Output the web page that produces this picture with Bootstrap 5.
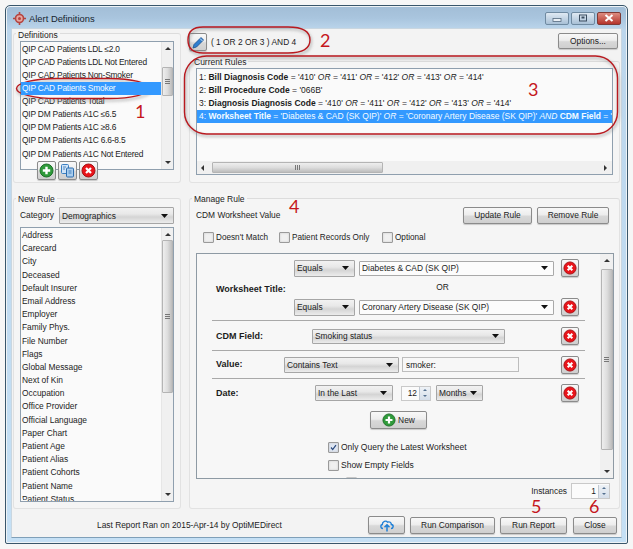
<!DOCTYPE html>
<html lang="en"><head><meta charset="utf-8"><title>Alert Definitions</title>
<link href="https://cdn.jsdelivr.net/npm/bootstrap@5.3.0/dist/css/bootstrap.min.css" rel="stylesheet">
<style>
:root{--hl:#3399ff}
html,body{height:100%}
body{background:#f6f6f6;font:8.4px/13px "Liberation Sans",Arial,sans-serif;color:#1c1c1c;overflow:hidden}
.stage{position:relative;width:633px;height:549px;padding:5px}
.win{width:623px;height:539px;border:1px solid #39566b;border-radius:5px 5px 2px 2px;background:linear-gradient(#a2bdd6 0,#a9c5de 12px,#bcd6ec 24px,#c5e0f5 100%);display:flex;flex-direction:column;padding:0 5px 5px 5px;box-shadow:0 0 0 1px #eef3f6 inset}
.tbar{height:22px;display:flex;align-items:center;font-size:9.4px;color:#16242f;padding:3px 0 0 2px;gap:3px}
.wctl{margin-left:auto;margin-right:1px;display:flex;gap:2px;margin-top:-1px}
.wctl span{width:24px;height:13px;border:1px solid #6f8aa1;border-radius:2px;background:linear-gradient(#dfe9f3,#a8c0d6);display:flex;align-items:center;justify-content:center}
.wctl span.xb{background:linear-gradient(#dd8c80,#b5342b);border-color:#7f3a35;color:#fff}
.client{flex:1;background:#f3f3f3;border:1px solid #c9d6e0;border-bottom-color:#7f9fb8;display:flex;flex-direction:column;padding:4px 1px 0 1px;min-height:0}
.toprow{display:flex;gap:8px;height:150px}
.midrow{display:flex;gap:8px;height:311px;margin-top:15px}
.lcol{width:168px;flex:none;position:relative}
.rcol{width:431px;flex:none;position:relative;display:flex;flex-direction:column}
fieldset.fs{border:1px solid #e2e2e2;border-top-color:#dcdcdc;border-radius:3px;position:relative;height:100%;padding:7px 6px 6px 6px;background:#f5f5f5}
fieldset.fs>legend{position:absolute;top:-5px;left:2px;float:none;width:auto;margin:0;padding:0 2px;font-size:8.5px;line-height:11px;background:#f5f5f5;color:#222}
.toprow .lcol fieldset.fs>legend{top:-4px}
.lbx{border:1px solid #8f9fae;background:#fafafa;display:flex;overflow:hidden;min-height:0}
.items{flex:1;min-width:0;overflow:hidden}
.items .list-group-item{flex:none;background:transparent;border:0;padding:0 1px;height:13.2px;line-height:13px;font-size:8.4px;color:#1c1c1c;white-space:nowrap;border-radius:0}
.items .list-group-item.active{background:var(--hl);color:#f4fbff}
.vsb{width:12px;flex:none;background:#f0f0f0;display:flex;flex-direction:column;align-items:center;border-left:1px solid #e6e6e6}
.vsb i,.hsb i{display:block;flex:none}
.up{width:0;height:0;border:3px solid transparent;border-bottom:3px solid #333;border-top:0;margin:5px 0 4px}
.dn{width:0;height:0;border:3px solid transparent;border-top:3px solid #333;border-bottom:0;margin:4px 0 5px}
.thumb{width:11px;flex:none;border:1px solid #b4b4b4;border-radius:1px;background:linear-gradient(90deg,#eee,#ddd 50%,#bcbcbc);display:flex;align-items:center;justify-content:center}
.grip{width:5px;height:5px;border-top:1px solid #777;border-bottom:1px solid #777;position:relative}
.grip::after{content:"";position:absolute;left:0;right:0;top:1px;border-top:1px solid #777}
.th1{height:29px;margin-top:13px}.sp1{flex:1}
.th2{height:153px;margin-top:0}
.deflist{height:129px}
.deflist .items{padding-top:1px}
.deflist .list-group-item{font-size:8.4px;letter-spacing:-.2px}
.tools{position:absolute;left:23px;top:127px;display:flex;gap:2px}
.ib{width:19px;height:19px;padding:0;display:flex;align-items:center;justify-content:center}
.btn.wb{font:8.4px/13px "Liberation Sans",Arial,sans-serif;color:#1c1c1c;border:1px solid #8b8b8b;border-radius:2px;background:linear-gradient(#f8f8f8,#ededed 45%,#d8d8d8 55%,#cfcfcf);box-shadow:0 1px 1px rgba(0,0,0,.18);padding:0}
.rulehead{height:28px;display:flex;align-items:flex-start;gap:4px}
.rulehead .btn-opt{margin-left:auto;margin-right:2px;width:60px;height:16px}
.pb{width:18px;height:18px}
.expr{margin-top:2px;line-height:14px}
.rulesfs{height:122px!important;padding:6px!important}
.rules{height:107px;flex-direction:column}
.rules .items{padding-top:2px}
.rules .list-group-item{padding:0 2px;overflow:hidden;font-size:8.5px}
.rules .list-group-item.active{letter-spacing:-.03px}
.rules b{font-weight:700}
.rules em{font-style:italic}
.hsb{height:13px;flex:none;background:#f0f0f0;display:flex;align-items:center}
.lf{width:0;height:0;border:3px solid transparent;border-right:3px solid #333;border-left:0;margin:0 4px}
.rg{width:0;height:0;border:3px solid transparent;border-left:3px solid #333;border-right:0;margin:0 5px;margin-left:auto}
.hth{width:171px;height:11px;margin-left:4px;border:1px solid #b4b4b4;border-radius:1px;background:linear-gradient(#eee,#ddd 50%,#bcbcbc);display:flex;align-items:center;justify-content:center}
.hgrip{width:5px;height:5px;border-left:1px solid #777;border-right:1px solid #777;position:relative}
.hgrip::after{content:"";position:absolute;top:0;bottom:0;left:1px;border-left:1px solid #777}
.catrow{display:flex;align-items:center;height:17px;margin:1px 0 3px 0}
.catrow label{width:39px;flex:none}
.catlist .items{padding-top:1px}
.form-select.cb{font:8.4px/12px "Liberation Sans",Arial,sans-serif;color:#1c1c1c;height:16px;padding:0 12px 0 2px;border:1px solid #a6a6a6;border-radius:1px;background-color:#e4e4e4;min-height:0;background-image:url("data:image/svg+xml,%3Csvg xmlns='http://www.w3.org/2000/svg' width='7' height='4'%3E%3Cpath d='M0 0h7L3.5 4z' fill='%23111'/%3E%3C/svg%3E"),linear-gradient(#f2f2f2,#e8e8e8 40%,#d4d4d4 60%,#ececec);background-size:7px 4px,100% 100%;background-position:right 5px center,0 0;background-repeat:no-repeat}
.form-select.cb.flat{background-image:url("data:image/svg+xml,%3Csvg xmlns='http://www.w3.org/2000/svg' width='7' height='4'%3E%3Cpath d='M0 0h7L3.5 4z' fill='%23111'/%3E%3C/svg%3E"),linear-gradient(#fcfcfc,#fcfcfc);border-color:#a9a9a9;height:15px}
.catsel{flex:1;min-width:0;height:17px!important}
.catlist{height:275px}
.mhead{display:flex;align-items:center;height:17px;margin:1px 0 0 0;position:relative}
.mhead .actions{margin-left:auto;display:flex;gap:5px;margin-right:4px}
.ub{width:69px;height:17px}.rb{width:72px;height:17px}
.chkrow{display:flex;height:17px;align-items:center;margin:5px 0 0 7px}
.fc{display:flex;align-items:center}
.fc .form-check-input{width:11px;height:11px;margin:0 2px 0 0;border:1px solid #9a9a9a;border-radius:1px;background-color:#f0f0f0;flex:none;float:none;box-shadow:inset 0 0 2px #c4c4c4}
.fc .form-check-input:checked{background-color:#dfe6f2;background-image:url("data:image/svg+xml,%3Csvg xmlns='http://www.w3.org/2000/svg' viewBox='0 0 11 11'%3E%3Cpath d='M2.5 5.5l2 2.5 4-5.5' stroke='%232b4a7e' stroke-width='1.5' fill='none'/%3E%3C/svg%3E");background-size:100%}
.fc .form-check-label{font-size:8.5px;line-height:13px}
.chkrow .fc .form-check-label{font-size:8.2px}
.w76{width:76px}.w102{width:103px}
.pnl{margin:7px 0 0 0;width:418px;height:226px;border:1px solid #8e9aa4;display:flex;background:#f7f7f7;overflow:hidden}
.pbody{flex:1;padding:5px 0 0 15px;position:relative;min-width:0}
.frow{display:flex;align-items:center}
.lab{font-weight:700;width:68px;flex:none;font-size:9px}
.sep{border:0;border-top:1px solid #a9a9a9;opacity:1;margin:0;width:373px}
.sel-eq{width:61px;flex:none;height:17px!important}
.sel-wide{width:195px;flex:none;margin-left:4px}
.rx{width:18px;height:18px;margin-left:auto;flex:none;margin-right:21px}
.wsgrid{display:grid;grid-template-columns:82px 1fr;height:61px}
.wslab{font-weight:700;align-self:center;padding-left:4px;font-size:9px}
.wsctl{display:flex;flex-direction:column}
.wsor{text-align:center;height:21px;line-height:21px;padding-right:9px}
.rowa{padding-left:4px;height:29px;padding-top:1px}
.rowd{padding-left:4px;height:28px}
.rowb{padding-left:4px;height:27px}
.ml-cdm{margin-left:28px;width:193px;height:15px!important}
.ml-val{width:115px;margin:0;height:16px!important}
.val-in.form-control{width:117px;height:15px;margin-left:3px;font:8.4px/12px "Liberation Sans",Arial,sans-serif;padding:0 3px;border:1px solid #bdbdbd;border-radius:0;background:#f7f7f7;min-height:0;color:#1c1c1c}
.ml-date{margin-left:31px;width:78px;height:16px!important}
.spin{display:flex;height:15px;border:1px solid #c9c9c9;background:#fbfbfb;align-items:center;justify-content:flex-end;position:relative}
.spin .n{padding-right:2px}
.spin .ud{width:11px;height:13px;display:flex;flex-direction:column;align-items:center;justify-content:space-around;background:linear-gradient(#eef2f6,#d5deea);border-left:1px solid #c0c8d2}
.spin .ud i{display:block;width:0;height:0;border:2.5px solid transparent}
.spin .ud i.u{border-bottom-color:#55708f;border-top:0}.spin .ud i.d{border-top-color:#55708f;border-bottom:0}
.sp12{width:30px;margin-left:8px}
.sel-mo{width:47px;margin-left:5px;height:16px!important}
.newwrap{display:flex;justify-content:center;margin:4px 0 0 0;padding-right:15px}
.newb{width:57px;height:18px;display:flex!important;align-items:center;justify-content:center;gap:2px;border-radius:2px}
.lowchk{padding-left:116px;margin-top:12px;display:flex;flex-direction:column;gap:5px}
.nub{position:absolute;left:149px;bottom:-8px;width:11px;height:9px;background:#d6d6d6;border:1px solid #c8c8c8;border-radius:1px}
.pvsb{width:13px;border-left:0}
.pth{height:181px;margin-top:3px;width:12px}
.inst{position:absolute;right:9px;top:284px;display:flex;align-items:center;gap:4px}
.sp1n{width:39px;height:16px}
.foot{height:29px;display:flex;align-items:center;padding:4px 3px 0 84px;gap:5px}
.foot .ftext{margin-right:auto}
.cb1{width:37px;height:18px;display:flex!important;align-items:center;justify-content:center}
.cb2{width:85px;height:17px}.cb3{width:67px;height:17px}.cb4{width:44px;height:17px;margin-left:1px}
.anno{position:absolute;pointer-events:none;left:0;top:0;width:633px;height:549px}
.num{position:absolute;color:#c5161c;font-size:18px;line-height:18px;font-family:Lato,"Liberation Sans",Arial,sans-serif}
.n1{left:135px;top:102px}.n2{left:320px;top:31px}.n3{left:528px;top:80px}.n4{left:289px;top:197px}.n5{left:531px;top:497px}.n6{left:589px;top:497px}
</style></head><body>
<div class="stage">
<div class="win">
  <div class="tbar">
    <svg width="13" height="13" viewBox="0 0 13 13"><circle cx="6.5" cy="6.5" r="4" fill="#e6a6a0" stroke="#b5443f" stroke-width="1.6"/><circle cx="6.5" cy="6.5" r="1.5" fill="#b5443f"/><path d="M6.5 0v3M6.5 10v3M0 6.5h3M10 6.5h3" stroke="#b5443f" stroke-width="1.6"/></svg>
    <span>Alert Definitions</span>
    <div class="wctl">
      <span><svg width="10" height="7"><rect x="1" y="3.5" width="8" height="3" fill="#e9eff5" stroke="#54697e" stroke-width=".8"/></svg></span>
      <span><svg width="10" height="8"><rect x="1.5" y="1" width="7" height="6" fill="none" stroke="#3b4d60" stroke-width="1"/><rect x="3.5" y="2.5" width="3" height="2" fill="#3b4d60"/></svg></span>
      <span class="xb"><svg width="10" height="8"><path d="M1.5 1l7 6M8.5 1l-7 6" stroke="#fff" stroke-width="2"/></svg></span>
    </div>
  </div>
  <div class="client">
    <div class="toprow">
      <div class="lcol">
        <fieldset class="fs"><legend>Definitions</legend>
          <div class="lbx deflist">
            <ul class="list-group items">
              <li class="list-group-item">QIP CAD Patients LDL ≤2.0</li>
              <li class="list-group-item">QIP CAD Patients LDL Not Entered</li>
              <li class="list-group-item">QIP CAD Patients Non-Smoker</li>
              <li class="list-group-item active">QIP CAD Patients Smoker</li>
              <li class="list-group-item">QIP CAD Patients Total</li>
              <li class="list-group-item">QIP DM Patients A1C ≤6.5</li>
              <li class="list-group-item">QIP DM Patients A1C ≥8.6</li>
              <li class="list-group-item">QIP DM Patients A1C 6.6-8.5</li>
              <li class="list-group-item">QIP DM Patients A1C Not Entered</li>
            </ul>
            <div class="vsb"><i class="up"></i><div class="thumb th1"><span class="grip"></span></div><span class="sp1"></span><i class="dn"></i></div>
          </div>
          <div class="tools">
            <button class="btn wb ib" aria-label="Add"><svg width="15" height="15" viewBox="0 0 15 15"><circle cx="7.500" cy="7.500" r="6.500" fill="#2f9a3a" stroke="#1c6f27"/><path d="M7.500 3.800v7.400M3.800 7.500h7.400" stroke="#fff" stroke-width="2.4"/></svg></button>
            <button class="btn wb ib" aria-label="Copy"><svg width="15" height="15" viewBox="0 0 15 15"><rect x="1.500" y="1.500" width="7" height="9" rx="1" fill="#cfe3f7" stroke="#3a7fc2"/><rect x="6.500" y="5" width="7" height="9" rx="1" fill="#a9cdee" stroke="#2c6dae"/><path d="M8.500 8h3M8.500 10h3M3 4h3M3 6h2" stroke="#2c6dae" stroke-width=".8"/></svg></button>
            <button class="btn wb ib" aria-label="Delete"><svg width="15" height="15" viewBox="0 0 15 15"><circle cx="7.500" cy="7.500" r="6.500" fill="#e9141a" stroke="#a50d10"/><path d="M5 5l5 5M10 5l-5 5" stroke="#fff" stroke-width="2.2"/></svg></button>
          </div>
        </fieldset>
      </div>
      <div class="rcol">
        <div class="rulehead">
          <button class="btn wb pb ib" aria-label="Edit"><svg width="15" height="15" viewBox="0 0 15 15"><path d="M3 9.500L10 2.500l2.500 2.500-7 7-3.500 1z" fill="#2f7fd0" stroke="#1a4f8a" stroke-width=".8"/><path d="M9 3.500l2.500 2.500" stroke="#cfe3f7"/></svg></button>
          <span class="expr">( 1 OR 2 OR 3 ) AND 4</span>
          <button class="btn wb btn-opt">Options...</button>
        </div>
        <fieldset class="fs rulesfs"><legend>Current Rules</legend>
          <div class="lbx rules">
            <ul class="list-group items">
              <li class="list-group-item">1: <b>Bill Diagnosis Code</b> = '410' <em>OR</em> = '411' <em>OR</em> = '412' <em>OR</em> = '413' <em>OR</em> = '414'</li>
              <li class="list-group-item">2: <b>Bill Procedure Code</b> = '066B'</li>
              <li class="list-group-item">3: <b>Diagnosis Diagnosis Code</b> = '410' <em>OR</em> = '411' <em>OR</em> = '412' <em>OR</em> = '413' <em>OR</em> = '414'</li>
              <li class="list-group-item active">4: <b>Worksheet Title</b> = 'Diabetes &amp; CAD (SK QIP)' <em>OR</em> = 'Coronary Artery Disease (SK QIP)' <em>AND</em> <b>CDM Field</b> = '</li>
            </ul>
            <div class="hsb"><i class="lf"></i><div class="hth"><span class="hgrip"></span></div><i class="rg"></i></div>
          </div>
        </fieldset>
      </div>
    </div>
    <div class="midrow">
      <div class="lcol">
        <fieldset class="fs"><legend>New Rule</legend>
          <div class="catrow"><label for="cat">Category</label>
            <select id="cat" class="form-select cb catsel"><option>Demographics</option></select></div>
          <div class="lbx catlist">
            <ul class="list-group items">
              <li class="list-group-item">Address</li><li class="list-group-item">Carecard</li><li class="list-group-item">City</li><li class="list-group-item">Deceased</li><li class="list-group-item">Default Insurer</li><li class="list-group-item">Email Address</li><li class="list-group-item">Employer</li><li class="list-group-item">Family Phys.</li><li class="list-group-item">File Number</li><li class="list-group-item">Flags</li><li class="list-group-item">Global Message</li><li class="list-group-item">Next of Kin</li><li class="list-group-item">Occupation</li><li class="list-group-item">Office Provider</li><li class="list-group-item">Official Language</li><li class="list-group-item">Paper Chart</li><li class="list-group-item">Patient Age</li><li class="list-group-item">Patient Alias</li><li class="list-group-item">Patient Cohorts</li><li class="list-group-item">Patient Name</li><li class="list-group-item">Patient Status</li>
            </ul>
            <div class="vsb"><i class="up"></i><div class="thumb th2"><span class="grip"></span></div><span class="sp1"></span><i class="dn"></i></div>
          </div>
        </fieldset>
      </div>
      <div class="rcol">
        <fieldset class="fs"><legend>Manage Rule</legend>
          <div class="mhead"><span>CDM Worksheet Value</span>
            <div class="actions"><button class="btn wb ub">Update Rule</button><button class="btn wb rb">Remove Rule</button></div>
          </div>
          <div class="chkrow">
            <div class="fc w76"><input class="form-check-input" type="checkbox" id="c1"><label class="form-check-label" for="c1">Doesn't Match</label></div>
            <div class="fc w102"><input class="form-check-input" type="checkbox" id="c2"><label class="form-check-label" for="c2">Patient Records Only</label></div>
            <div class="fc"><input class="form-check-input" type="checkbox" id="c3"><label class="form-check-label" for="c3">Optional</label></div>
          </div>
          <div class="pnl">
            <div class="pbody">
              <div class="wsgrid">
                <div class="wslab">Worksheet Title:</div>
                <div class="wsctl">
                  <div class="frow"><select class="form-select cb sel-eq"><option>Equals</option></select><select class="form-select cb flat sel-wide"><option>Diabetes &amp; CAD (SK QIP)</option></select><button class="btn wb rx ib" aria-label="Remove"><svg width="14" height="14" viewBox="0 0 15 15"><circle cx="7.500" cy="7.500" r="6.500" fill="#e9141a" stroke="#a50d10"/><path d="M5 5l5 5M10 5l-5 5" stroke="#fff" stroke-width="2.2"/></svg></button></div>
                  <div class="wsor">OR</div>
                  <div class="frow"><select class="form-select cb sel-eq"><option>Equals</option></select><select class="form-select cb flat sel-wide"><option>Coronary Artery Disease (SK QIP)</option></select><button class="btn wb rx ib" aria-label="Remove"><svg width="14" height="14" viewBox="0 0 15 15"><circle cx="7.500" cy="7.500" r="6.500" fill="#e9141a" stroke="#a50d10"/><path d="M5 5l5 5M10 5l-5 5" stroke="#fff" stroke-width="2.2"/></svg></button></div>
                </div>
              </div>
              <hr class="sep">
              <div class="frow rowa"><span class="lab">CDM Field:</span><select class="form-select cb ml-cdm"><option>Smoking status</option></select><button class="btn wb rx ib" aria-label="Remove"><svg width="14" height="14" viewBox="0 0 15 15"><circle cx="7.500" cy="7.500" r="6.500" fill="#e9141a" stroke="#a50d10"/><path d="M5 5l5 5M10 5l-5 5" stroke="#fff" stroke-width="2.2"/></svg></button></div>
              <hr class="sep">
              <div class="frow rowb"><span class="lab">Value:</span><select class="form-select cb ml-val"><option>Contains Text</option></select><input class="form-control val-in" value="smoker:"><button class="btn wb rx ib" aria-label="Remove"><svg width="14" height="14" viewBox="0 0 15 15"><circle cx="7.500" cy="7.500" r="6.500" fill="#e9141a" stroke="#a50d10"/><path d="M5 5l5 5M10 5l-5 5" stroke="#fff" stroke-width="2.2"/></svg></button></div>
              <hr class="sep">
              <div class="frow rowd"><span class="lab">Date:</span><select class="form-select cb ml-date"><option>In the Last</option></select><div class="spin sp12"><span class="n">12</span><span class="ud"><i class="u"></i><i class="d"></i></span></div><select class="form-select cb sel-mo"><option>Months</option></select><button class="btn wb rx ib" aria-label="Remove"><svg width="14" height="14" viewBox="0 0 15 15"><circle cx="7.500" cy="7.500" r="6.500" fill="#e9141a" stroke="#a50d10"/><path d="M5 5l5 5M10 5l-5 5" stroke="#fff" stroke-width="2.2"/></svg></button></div>
              <div class="newwrap"><button class="btn wb newb"><svg width="14" height="14" viewBox="0 0 15 15"><circle cx="7.500" cy="7.500" r="6.500" fill="#2f9a3a" stroke="#1c6f27"/><path d="M7.500 3.800v7.400M3.800 7.500h7.400" stroke="#fff" stroke-width="2.4"/></svg>New</button></div>
              <div class="lowchk">
                <div class="fc"><input class="form-check-input" type="checkbox" id="c4" checked><label class="form-check-label" for="c4">Only Query the Latest Worksheet</label></div>
                <div class="fc"><input class="form-check-input" type="checkbox" id="c5"><label class="form-check-label" for="c5">Show Empty Fields</label></div>
              </div>
              <span class="nub"></span>
            </div>
            <div class="vsb pvsb"><i class="up"></i><div class="thumb pth"><span class="grip"></span></div><span class="sp1"></span><i class="dn"></i></div>
          </div>
          <div class="inst"><span>Instances</span><div class="spin sp1n"><span class="n">1</span><span class="ud"><i class="u"></i><i class="d"></i></span></div></div>
        </fieldset>
      </div>
    </div>
    <div class="foot">
      <span class="ftext">Last Report Ran on 2015-Apr-14 by OptiMEDirect</span>
      <button class="btn wb cb1" aria-label="Upload"><svg width="16" height="13" viewBox="0 0 16 13"><path d="M4 9.500C1.500 9.500 1 6.200 3.300 5.500 3.300 2.500 7 1 8.500 3.200 10.500 2.200 12.500 3.500 12.300 5.500 15 5.800 14.600 9.500 12 9.500" fill="none" stroke="#1f7fd6" stroke-width="1.4"/><path d="M8 12.500V6M5.500 8.200L8 5.700l2.500 2.500" fill="none" stroke="#1f7fd6" stroke-width="1.5"/></svg></button>
      <button class="btn wb cb2">Run Comparison</button>
      <button class="btn wb cb3">Run Report</button>
      <button class="btn wb cb4">Close</button>
    </div>
  </div>
</div>
<svg class="anno" viewBox="0 0 633 549" aria-hidden="true">
  <defs><filter id="sh" x="-10%" y="-20%" width="120%" height="150%"><feGaussianBlur stdDeviation="1.6"/></filter></defs>
  <g fill="none">
    <rect x="16.500" y="78.500" width="133" height="20" rx="40" ry="10" stroke="#777" stroke-opacity=".5" stroke-width="2" filter="url(#sh)" transform="translate(1 2)"/>
    <rect x="16.500" y="78.500" width="133" height="20" rx="40" ry="10" stroke="#b9191f" stroke-width="1.4"/>
    <path d="M203 27H288Q310 27 310 40 310 53 288 53H203Q188 53 188 40 188 27 203 27z" stroke="#777" stroke-opacity=".5" stroke-width="2" filter="url(#sh)" transform="translate(1 2)"/>
    <path d="M203 27H288Q310 27 310 40 310 53 288 53H203Q188 53 188 40 188 27 203 27z" stroke="#b9191f" stroke-width="1.4"/>
    <rect x="184.500" y="56" width="433" height="78" rx="22" stroke="#777" stroke-opacity=".5" stroke-width="2" filter="url(#sh)" transform="translate(1 2)"/>
    <rect x="184.500" y="56" width="433" height="78" rx="22" stroke="#b9191f" stroke-width="1.4"/>
  </g>
</svg>
<span class="num n1">1</span><span class="num n2">2</span><span class="num n3">3</span><span class="num n4">4</span><span class="num n5">5</span><span class="num n6">6</span>
</div>
</body></html>
